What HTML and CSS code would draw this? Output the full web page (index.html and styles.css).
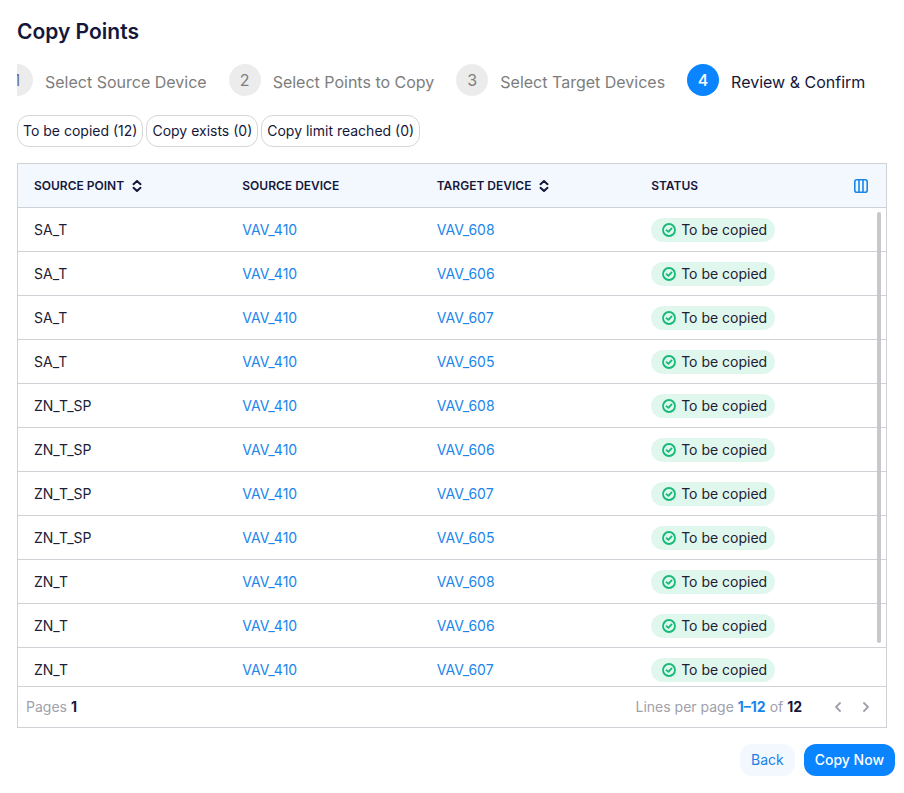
FILE: index.html
```html
<!DOCTYPE html>
<html lang="en">
<head>
<meta charset="utf-8">
<meta name="viewport" content="width=device-width, initial-scale=1">
<title>Copy Points</title>
<link rel="stylesheet" href="styles.css">
</head>
<body>
<svg class="sprite" aria-hidden="true">
  <symbol id="sort" viewBox="0 0 10 12"><path d="M1.500 4.200 5 1l3.500 3.200M1.500 7.800 5 11l3.500-3.200"/></symbol>
  <symbol id="check" viewBox="0 0 14 14"><circle cx="7" cy="7" r="6"/><path d="m4.500 7.200 1.900 1.700 3.200-3.500"/></symbol>
  <symbol id="columns" viewBox="0 0 14 14"><rect x=".8" y=".8" width="12.400" height="12.400" rx="2"/><path d="M5 1v12M9 1v12"/></symbol>
  <symbol id="prev" viewBox="0 0 12 12"><path d="M8 2 4 6l4 4"/></symbol>
  <symbol id="next" viewBox="0 0 12 12"><path d="m4 2 4 4-4 4"/></symbol>
</svg>
<main class="page">
  <h1 class="title">Copy Points</h1>
  <ol class="steps">
    <li class="step"><span class="step-number">1</span><span class="step-label">Select Source Device</span></li>
    <li class="step"><span class="step-number">2</span><span class="step-label">Select Points to Copy</span></li>
    <li class="step"><span class="step-number">3</span><span class="step-label">Select Target Devices</span></li>
    <li class="step step-active" aria-current="step"><span class="step-number">4</span><span class="step-label">Review &amp; Confirm</span></li>
  </ol>
  <div class="filters">
    <button class="chip" type="button">To be copied (12)</button>
    <button class="chip" type="button">Copy exists (0)</button>
    <button class="chip" type="button">Copy limit reached (0)</button>
  </div>
  <section class="panel">
    <div class="scroller">
      <table class="points">
        <colgroup><col class="col-point"><col class="col-source"><col class="col-target"><col></colgroup>
        <thead>
          <tr>
            <th><button class="sort" type="button">SOURCE POINT<svg class="icon-sort"><use href="#sort"/></svg></button></th>
            <th>SOURCE DEVICE</th>
            <th><button class="sort" type="button">TARGET DEVICE<svg class="icon-sort"><use href="#sort"/></svg></button></th>
            <th><div class="head-end">STATUS<button class="icon-button" type="button" aria-label="Choose columns"><svg class="icon-columns"><use href="#columns"/></svg></button></div></th>
          </tr>
        </thead>
        <tbody>
          <tr><td>SA_T</td><td><a href="#">VAV_410</a></td><td><a href="#">VAV_608</a></td><td><span class="badge"><svg class="icon-check"><use href="#check"/></svg>To be copied</span></td></tr>
          <tr><td>SA_T</td><td><a href="#">VAV_410</a></td><td><a href="#">VAV_606</a></td><td><span class="badge"><svg class="icon-check"><use href="#check"/></svg>To be copied</span></td></tr>
          <tr><td>SA_T</td><td><a href="#">VAV_410</a></td><td><a href="#">VAV_607</a></td><td><span class="badge"><svg class="icon-check"><use href="#check"/></svg>To be copied</span></td></tr>
          <tr><td>SA_T</td><td><a href="#">VAV_410</a></td><td><a href="#">VAV_605</a></td><td><span class="badge"><svg class="icon-check"><use href="#check"/></svg>To be copied</span></td></tr>
          <tr><td>ZN_T_SP</td><td><a href="#">VAV_410</a></td><td><a href="#">VAV_608</a></td><td><span class="badge"><svg class="icon-check"><use href="#check"/></svg>To be copied</span></td></tr>
          <tr><td>ZN_T_SP</td><td><a href="#">VAV_410</a></td><td><a href="#">VAV_606</a></td><td><span class="badge"><svg class="icon-check"><use href="#check"/></svg>To be copied</span></td></tr>
          <tr><td>ZN_T_SP</td><td><a href="#">VAV_410</a></td><td><a href="#">VAV_607</a></td><td><span class="badge"><svg class="icon-check"><use href="#check"/></svg>To be copied</span></td></tr>
          <tr><td>ZN_T_SP</td><td><a href="#">VAV_410</a></td><td><a href="#">VAV_605</a></td><td><span class="badge"><svg class="icon-check"><use href="#check"/></svg>To be copied</span></td></tr>
          <tr><td>ZN_T</td><td><a href="#">VAV_410</a></td><td><a href="#">VAV_608</a></td><td><span class="badge"><svg class="icon-check"><use href="#check"/></svg>To be copied</span></td></tr>
          <tr><td>ZN_T</td><td><a href="#">VAV_410</a></td><td><a href="#">VAV_606</a></td><td><span class="badge"><svg class="icon-check"><use href="#check"/></svg>To be copied</span></td></tr>
          <tr><td>ZN_T</td><td><a href="#">VAV_410</a></td><td><a href="#">VAV_607</a></td><td><span class="badge"><svg class="icon-check"><use href="#check"/></svg>To be copied</span></td></tr>
        </tbody>
      </table>
    </div>
    <div class="thumb"></div>
    <footer class="pager">
      <span>Pages <b>1</b></span>
      <span class="lines">Lines per page <b class="range">1–12</b> of <b>12</b></span>
      <button class="icon-button" type="button" aria-label="Previous page"><svg class="icon-arrow"><use href="#prev"/></svg></button>
      <button class="icon-button" type="button" aria-label="Next page"><svg class="icon-arrow"><use href="#next"/></svg></button>
    </footer>
  </section>
  <div class="actions">
    <button class="button" type="button">Back</button>
    <button class="button button-primary" type="button">Copy Now</button>
  </div>
</main>
</body>
</html>
```
FILE: styles.css
```css
* { box-sizing: border-box; }

body {
  margin: 0;
  background: #fff;
  color: #15173a;
  font: 14px/20px Inter, "Liberation Sans", sans-serif;
}

button {
  margin: 0;
  padding: 0;
  border: 0;
  background: none;
  color: inherit;
  font: inherit;
  cursor: pointer;
}

a { color: #1a86ea; text-decoration: none; }

svg { fill: none; stroke: currentColor; stroke-linecap: round; stroke-linejoin: round; flex: none; }

.sprite { position: absolute; width: 0; height: 0; }

.page {
  display: flex;
  flex-direction: column;
  height: 100vh;
  padding: 18px 17px 17px;
}

.title { margin: 0 0 18px; font-size: 21px; line-height: 28px; font-weight: 600; }

.steps {
  display: flex;
  gap: 22px;
  margin: 0 0 19px;
  padding: 0;
  overflow: hidden;
  list-style: none;
  color: #7d7d7d;
  font-size: 16px;
  white-space: nowrap;
}

.step { display: flex; align-items: center; gap: 12px; flex: none; }
.step:first-child { margin-left: -16px; }
.step:first-child .step-number { color: #6d7090; }
.step-label { padding-top: 4px; }

.step-number {
  width: 32px;
  border-radius: 50%;
  background: #ececec;
  line-height: 32px;
  text-align: center;
}

.step-active { color: #15173a; }
.step-active .step-number { background: #0a84ff; color: #fff; font-weight: 500; }

.filters { display: flex; gap: 3px; margin-bottom: 16px; }

.chip {
  height: 32px;
  padding: 0 5px;
  border: 1px solid #d6d6d9;
  border-radius: 12px;
  white-space: nowrap;
}

.panel {
  position: relative;
  display: flex;
  flex: 1;
  flex-direction: column;
  min-height: 0;
  border: 1px solid #d0d1d6;
}

.scroller { flex: 1; min-height: 0; overflow-y: auto; scrollbar-width: none; }

.thumb {
  position: absolute;
  top: 48px;
  right: 5px;
  bottom: 84px;
  width: 4px;
  border-radius: 2px;
  background: #c8c8cc;
}

.points { width: 100%; border-collapse: separate; border-spacing: 0; table-layout: fixed; }
.col-point { width: 24%; }
.col-source { width: 22.4%; }
.col-target { width: 24.7%; }

th, td {
  height: 44px;
  padding: 0 16px;
  border-bottom: 1px solid #d0d1d6;
  text-align: left;
  white-space: nowrap;
}

th {
  position: sticky;
  top: 0;
  background: #f3f8ff;
  font-size: 12px;
  font-weight: 600;
}

td { color: #1d2033; }

.sort { display: flex; align-items: center; gap: 8px; }
.head-end { display: flex; align-items: center; justify-content: space-between; }
.icon-button { display: flex; }
.icon-sort { width: 10px; height: 12px; stroke-width: 2; }
.icon-columns { width: 18px; height: 14px; color: #1a86ea; stroke-width: 1.6; }
.icon-check { width: 14px; height: 14px; color: #16b978; stroke-width: 1.8; }
.icon-arrow { width: 12px; height: 12px; stroke-width: 1.8; }

.badge {
  display: inline-flex;
  align-items: center;
  gap: 5px;
  height: 24px;
  padding: 0 8px 0 11px;
  border-radius: 12px;
  background: #e0f7ee;
  vertical-align: middle;
}

.pager {
  display: flex;
  align-items: center;
  gap: 16px;
  height: 41px;
  padding: 0 14px 0 8px;
  border-top: 1px solid #d0d1d6;
  color: #a0a1ab;
}

.pager b { color: #15173a; }
.pager .range { color: #1a86ea; }
.lines { margin: 0 14px 0 auto; }

.actions { display: flex; justify-content: flex-end; gap: 9px; margin: 16px -8px 0 0; }

.button {
  height: 32px;
  padding: 0 11px;
  border-radius: 12px;
  background: #f3f8ff;
  color: #1a80ea;
}

.button-primary { background: #0a84ff; color: #fff; font-weight: 500; }
```
